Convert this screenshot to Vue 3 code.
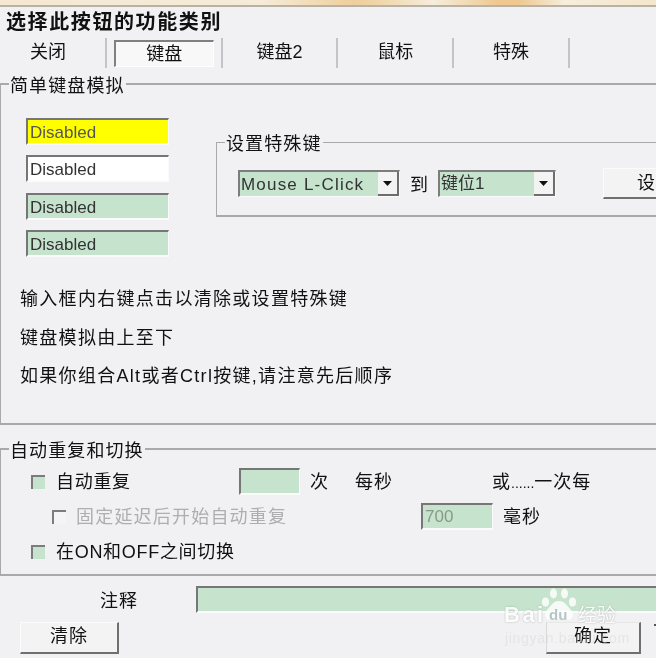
<script setup>
const tabs = [
  { label: '关闭' },
  { label: '键盘', active: true },
  { label: '键盘2' },
  { label: '鼠标' },
  { label: '特殊' }
]
const keys = [
  { text: 'Disabled', tone: 'yellow' },
  { text: 'Disabled', tone: 'white' },
  { text: 'Disabled', tone: 'green' },
  { text: 'Disabled', tone: 'green' }
]
const hints = [
  '输入框内右键点击以清除或设置特殊键',
  '键盘模拟由上至下',
  '如果你组合Alt或者Ctrl按键,请注意先后顺序'
]
</script>

<template>
  <div class="page">
    <div class="strip"></div>
    <div class="title">选择此按钮的功能类别</div>

    <div class="tabs">
      <div v-for="t in tabs" :key="t.label" class="tab">
        <span class="tab-label" :class="{ active: t.active }">{{ t.label }}</span>
      </div>
    </div>

    <fieldset class="group group-one">
      <legend>简单键盘模拟</legend>
      <div class="top-area">
        <div class="key-list">
          <div v-for="(k, i) in keys" :key="i" class="field key" :class="k.tone">{{ k.text }}</div>
        </div>
        <fieldset class="group inner">
          <legend>设置特殊键</legend>
          <div class="inner-row">
            <div class="select select-a">
              <span class="select-text wide">Mouse L-Click</span>
              <span class="arrow"><svg width="9" height="5" viewBox="0 0 9 5"><path d="M0 0h9L4.500 5z" fill="#111"/></svg></span>
            </div>
            <span class="to">到</span>
            <div class="select select-b">
              <span class="select-text">键位1</span>
              <span class="arrow"><svg width="9" height="5" viewBox="0 0 9 5"><path d="M0 0h9L4.500 5z" fill="#111"/></svg></span>
            </div>
            <div class="btn set-btn">设</div>
          </div>
        </fieldset>
      </div>
      <p v-for="h in hints" :key="h" class="hint">{{ h }}</p>
    </fieldset>

    <fieldset class="group group-two">
      <legend>自动重复和切换</legend>
      <div class="row row-main">
        <span class="check green-check"></span>
        <span class="check-label w-a">自动重复</span>
        <div class="field green times"></div>
        <span class="txt w-b">次</span>
        <span class="txt w-c">每秒</span>
        <span class="txt">或<span class="dots">......</span>一次每</span>
      </div>
      <div class="row row-sub">
        <span class="check"></span>
        <span class="check-label w-d off">固定延迟后开始自动重复</span>
        <div class="field green ms">700</div>
        <span class="txt ms-label">毫秒</span>
      </div>
      <div class="row row-main">
        <span class="check green-check"></span>
        <span class="check-label tight">在ON和OFF之间切换</span>
      </div>
    </fieldset>

    <div class="note-row">
      <span class="note-label">注释</span>
      <div class="field green note"></div>
    </div>

    <div class="btn-row">
      <div class="btn clear-btn">清除</div>
      <div class="btn ok-btn">确定</div>
    </div>

    <div class="mark">
      <svg class="paw" width="36" height="34" viewBox="0 0 36 34">
        <g fill="#fff">
          <ellipse cx="4.500" cy="14" rx="3.500" ry="4.500"/>
          <ellipse cx="12.500" cy="5.500" rx="3.500" ry="5"/>
          <ellipse cx="23.500" cy="5.500" rx="3.500" ry="5"/>
          <ellipse cx="31.500" cy="14" rx="3.500" ry="4.500"/>
          <path d="M18 13c6 0 8 5 12 9 4 5 1 11-6 10-4-1-8-1-12 0-7 1-10-5-6-10 4-4 6-9 12-9z"/>
        </g>
      </svg>
      <div class="mark-bai">Bai</div>
      <div class="mark-du">du</div>
      <div class="mark-jy">经验</div>
      <div class="mark-sub">jingyan.baidu.com</div>
    </div>
    <span class="edge-dot"></span>
  </div>
</template>

<style scoped>
.page {
  position: relative;
  width: 656px;
  height: 658px;
  overflow: hidden;
  background: #f1f0f2;
  color: #111;
  font-family: "Liberation Sans", "Noto Sans CJK SC", sans-serif;
  font-size: 18px;
  filter: blur(0.35px);
}
.strip {
  height: 7px;
  background: linear-gradient(90deg, #f4e8d2 0%, #f5ebd8 40%, #efcf9c 54%, #f0d6ab 58%, #f6eddc 66%, #eec88f 76%, #eec88f 79%, #f6eddc 86%, #f4e6cc 100%);
  border-bottom: 2px solid #b8b2a6;
  box-sizing: border-box;
}
.title {
  height: 31px;
  line-height: 31px;
  padding-left: 6px;
  font-size: 20px;
  font-weight: 700;
  letter-spacing: 1.600px;
  white-space: nowrap;
}
.tabs {
  display: flex;
  height: 30px;
  margin-left: -9px;
}
.tab {
  box-sizing: border-box;
  width: 115.800px;
  flex: none;
  display: flex;
  align-items: center;
  justify-content: center;
  border-right: 2px solid #c4c4c6;
  padding: 0 7px;
}
.tab-label {
  flex: 1;
  height: 27px;
  line-height: 24px;
  text-align: center;
  font-size: 18px;
  box-sizing: border-box;
}
.tab-label.active {
  background: #f8f8f9;
  border-top: 2px solid #808080;
  border-left: 2px solid #808080;
  border-right: 1px solid #fff;
  border-bottom: 1px solid #fff;
}
.group {
  margin: 0;
  padding: 0;
  min-width: 0;
  box-sizing: border-box;
  border: 0;
  border-top: 2px solid #a9a9ac;
  border-left: 1px solid #a9a9ac;
  border-bottom: 2px solid #a9a9ac;
}
.group legend {
  padding: 0 1px;
  margin-left: 8px;
  height: 24px;
  line-height: 28px;
  font-size: 18px;
  letter-spacing: 1.100px;
  white-space: nowrap;
}
.group-one {
  margin-top: 4px;
  width: 670px;
  height: 353px;
}
.top-area {
  display: flex;
  padding: 22px 0 0 25px;
  height: 182px;
  box-sizing: border-box;
}
.key-list {
  display: flex;
  flex-direction: column;
  gap: 10.300px;
  width: 143px;
  flex: none;
}
.field {
  box-sizing: border-box;
  border-top: 2px solid #767676;
  border-left: 2px solid #767676;
  border-right: 1px solid #fbfbfb;
  border-bottom: 2px solid #fbfbfb;
}
.key {
  height: 27px;
  line-height: 25px;
  padding-left: 2px;
  font-size: 17px;
  color: #333;
}
.yellow { background: #ffff00; color: #555; }
.white { background: #fff; }
.green { background: #c6e3cd; }
.inner {
  margin: 12px 0 0 47px;
  width: 460px;
  height: 87px;
  flex: none;
  border-top-width: 1px;
  border-bottom-width: 2px;
}
.inner legend {
  margin-left: 8px;
}
.inner-row {
  display: flex;
  align-items: center;
  padding: 14px 0 0 21px;
}
.select {
  box-sizing: border-box;
  height: 27px;
  display: flex;
  align-items: center;
  background: #c6e3cd;
  border-top: 2px solid #7d7d7d;
  border-left: 2px solid #7d7d7d;
  border-right: 1px solid #fafafa;
  border-bottom: 1px solid #fafafa;
  flex: none;
}
.select-a { width: 162px; }
.select-b { width: 118px; }
.select-text {
  flex: 1;
  padding-left: 1px;
  white-space: nowrap;
  font-size: 17px;
  color: #333;
  line-height: 22px;
}
.select-text.wide {
  letter-spacing: 1.200px;
  padding-top: 2px;
}
.arrow {
  box-sizing: border-box;
  width: 21px;
  height: 24px;
  display: flex;
  align-items: center;
  justify-content: center;
  flex: none;
  background: #f3f3f4;
  border-right: 2px solid #6d6d6d;
  border-bottom: 2px solid #6d6d6d;
}
.to {
  width: 38px;
  flex: none;
  text-align: center;
  padding-bottom: 2px;
}
.btn {
  box-sizing: border-box;
  text-align: center;
  background: #f3f3f4;
  border-top: 1px solid #fbfbfb;
  border-left: 1px solid #fbfbfb;
  border-right: 2px solid #6f6f6f;
  border-bottom: 2px solid #6f6f6f;
  flex: none;
}
.set-btn {
  width: 100px;
  height: 31px;
  line-height: 28px;
  margin-left: 47px;
  text-align: left;
  padding-left: 33px;
  white-space: nowrap;
}
.hint {
  margin: 0;
  padding-left: 19px;
  height: 38.600px;
  line-height: 42.600px;
  letter-spacing: 1.300px;
  white-space: nowrap;
}
.group-two {
  margin-top: 12px;
  width: 670px;
  height: 139px;
}
.row {
  display: flex;
  align-items: center;
  height: 27px;
  margin-bottom: 8px;
  white-space: nowrap;
}
.group-two legend + .row { margin-top: 7px; }
.row-main { padding-left: 30px; }
.row-sub { padding-left: 51px; }
.check {
  box-sizing: border-box;
  width: 14px;
  height: 14px;
  flex: none;
  background: #f4f4f5;
  border-top: 2px solid #7c7c7c;
  border-left: 2px solid #7c7c7c;
}
.green-check { background: #c6e3cd; }
.check-label {
  margin-left: 11px;
  letter-spacing: 1.200px;
  padding-bottom: 4px;
}
.check-label.tight { letter-spacing: 0.700px; }
.off { color: #aeaeb0; }
.w-a { width: 183px; flex: none; box-sizing: border-box; letter-spacing: 0.700px; }
.w-d { width: 345px; flex: none; box-sizing: border-box; margin-left: 10px; }
.w-b { width: 45px; margin-left: 10px; flex: none; }
.w-c { width: 137px; flex: none; }
.txt { letter-spacing: 1px; padding-bottom: 4px; }
.dots { font-size: 14px; letter-spacing: 0; }
.times { width: 61px; height: 27px; flex: none; }
.ms {
  width: 72px;
  height: 27px;
  flex: none;
  padding-left: 2px;
  line-height: 24px;
  font-size: 17px;
  color: #8a988c;
}
.ms-label { margin-left: 10px; }
.note-row {
  display: flex;
  align-items: center;
  margin-top: 10px;
  padding-left: 100px;
  height: 27px;
}
.note-label {
  width: 96px;
  flex: none;
  letter-spacing: 1px;
  padding-bottom: 2px;
}
.note { width: 500px; height: 27px; flex: none; }
.btn-row {
  display: flex;
  justify-content: space-between;
  margin-top: 9px;
  padding: 0 15px 0 20px;
}
.clear-btn, .ok-btn {
  height: 32px;
  line-height: 26px;
  letter-spacing: 1px;
}
.clear-btn { width: 99px; }
.ok-btn { width: 95px; border-top-color: #e8e8e9; border-left-color: #d8d8da; }
.mark {
  position: absolute;
  left: 503px;
  top: 587px;
  width: 118px;
  height: 56px;
  color: #fff;
  opacity: 0.85;
  pointer-events: none;
}
.paw {
  position: absolute;
  left: 38px;
  top: 1px;
}
.mark-bai {
  position: absolute;
  left: 1px;
  top: 15px;
  font-size: 22px;
  font-weight: 700;
  line-height: 26px;
  letter-spacing: 2.500px;
  text-shadow: 0 0 2px #a4a8a8;
}
.mark-du {
  position: absolute;
  left: 46px;
  top: 19px;
  font-size: 15px;
  font-weight: 700;
  line-height: 18px;
  color: #a9c0bf;
}
.mark-jy {
  position: absolute;
  left: 75px;
  top: 17px;
  font-size: 19px;
  line-height: 24px;
  white-space: nowrap;
  text-shadow: 0 0 2px #a4a8a8;
}
.mark-sub {
  position: absolute;
  left: 2px;
  top: 43px;
  font-size: 14px;
  line-height: 16px;
  letter-spacing: 0.700px;
  opacity: 0.55;
  white-space: nowrap;
  color: #d6d6d9;
}
.edge-dot {
  position: absolute;
  left: 654px;
  top: 624px;
  width: 2px;
  height: 2px;
  background: #555;
}
</style>
